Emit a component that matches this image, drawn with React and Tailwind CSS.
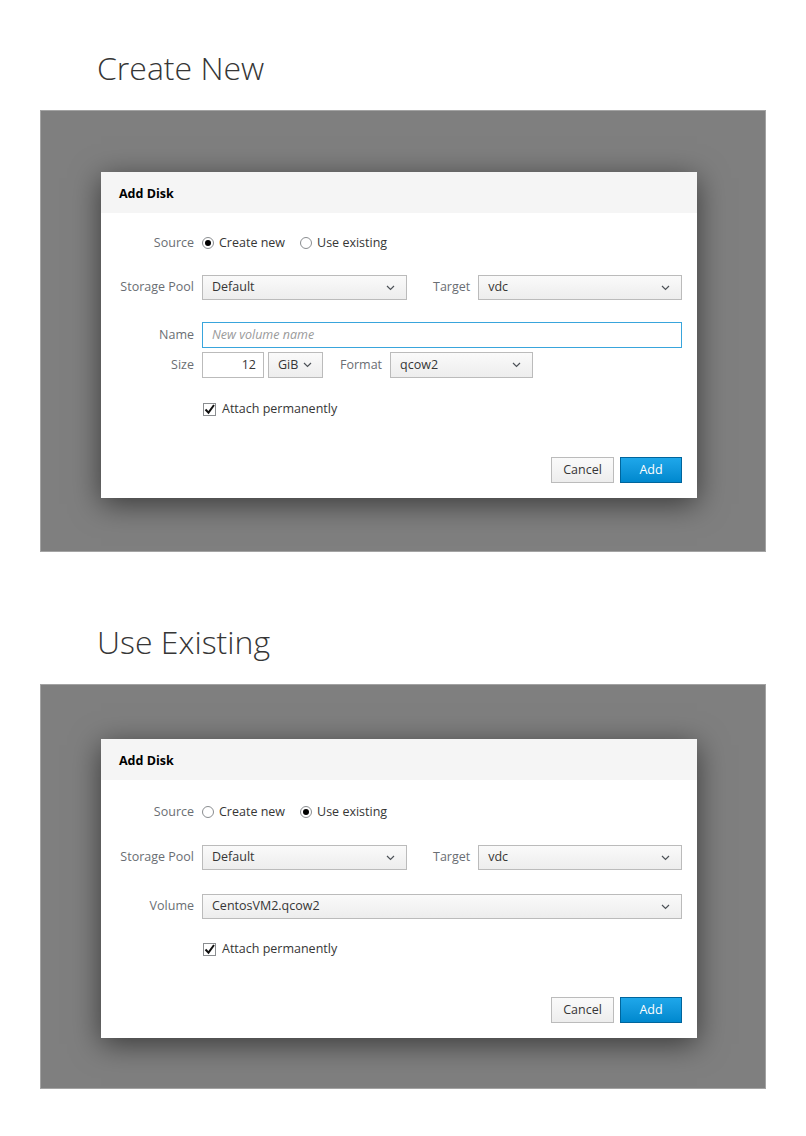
const font = { fontFamily: '"Open Sans", "Liberation Sans", sans-serif' };

const Chevron = () => (
    <svg width="9" height="6" viewBox="0 0 9 6" className="shrink-0">
        <path d="M1 1l3.5 3.5L8 1" fill="none" stroke="#4d5258" strokeWidth="1.2" />
    </svg>
);

const Select = ({ value, className = '' }) => (
    <div
        className={`h-[25px] flex items-center justify-between pl-[9px] pr-[11px] border border-[#bbbbbb] bg-gradient-to-b from-[#fafafa] to-[#ededed] text-[12.5px] text-[#363636] ${className}`}
    >
        <span>{value}</span>
        <Chevron />
    </div>
);

const Label = ({ children }) => (
    <div className="w-[93px] shrink-0 text-right text-[12.5px] text-[#6a6e73]">{children}</div>
);

const Radio = ({ checked, label }) => (
    <div className="flex items-center gap-[5px]">
        <span className="w-[12px] h-[12px] rounded-full border border-[#8a8d90] bg-white flex items-center justify-center">
            {checked && <span className="w-[6px] h-[6px] rounded-full bg-black" />}
        </span>
        <span className="text-[12.5px] text-[#363636]">{label}</span>
    </div>
);

const Checkbox = ({ label }) => (
    <div className="flex items-center gap-[6px]">
        <span className="w-[13px] h-[13px] border border-[#8a8d90] bg-white relative">
            <svg width="13" height="13" viewBox="0 0 13 13" className="absolute -left-[1px] -top-[1px]">
                <path d="M2.5 6.5l3 3.2L11 2" fill="none" stroke="#111" strokeWidth="2" />
            </svg>
        </span>
        <span className="text-[12.5px] text-[#363636]">{label}</span>
    </div>
);

const Buttons = () => (
    <div className="flex justify-end gap-[6px]">
        <button className="w-[63px] h-[26px] border border-[#bbbbbb] bg-gradient-to-b from-[#fafafa] to-[#ededed] text-[12.5px] text-[#363636]">
            Cancel
        </button>
        <button className="w-[62px] h-[26px] border border-[#00659c] bg-gradient-to-b from-[#1ea7ea] to-[#0088ce] text-[12.5px] text-white">
            Add
        </button>
    </div>
);

const Dialog = ({ useExisting }) => (
    <div className="w-[596px] bg-white shadow-[0_6px_28px_rgba(0,0,0,0.55)]">
        <div className="h-[41px] bg-[#f5f5f5] flex items-center pl-[18px] pt-[3px] text-[12.5px] font-bold text-black">
            Add Disk
        </div>
        <div className={`pr-[15px] pb-[15px] ${useExisting ? 'pt-[22px]' : 'pt-[20px]'}`}>
            <div className="h-[20px] flex items-center">
                <Label>Source</Label>
                <div className="ml-[8px] flex items-center gap-[15px]">
                    <Radio checked={!useExisting} label="Create new" />
                    <Radio checked={useExisting} label="Use existing" />
                </div>
            </div>
            <div className={`flex items-center ${useExisting ? 'mt-[23px]' : 'mt-[22px]'}`}>
                <Label>Storage Pool</Label>
                <Select value="Default" className="ml-[8px] w-[205px]" />
                <div className="ml-[26px] text-[12.5px] text-[#6a6e73]">Target</div>
                <Select value="vdc" className="ml-[8px] flex-1" />
            </div>
            {useExisting ? (
                <div className="mt-[24px] flex items-center">
                    <Label>Volume</Label>
                    <Select value="CentosVM2.qcow2" className="ml-[8px] flex-1" />
                </div>
            ) : (
                <>
                    <div className="mt-[22px] flex items-center">
                        <Label>Name</Label>
                        <div className="ml-[8px] flex-1 h-[26px] border border-[#39a5dc] flex items-center pl-[9px] text-[12.5px] italic text-[#9a9a9a]">
                            New volume name
                        </div>
                    </div>
                    <div className="mt-[4px] flex items-center">
                        <Label>Size</Label>
                        <div className="ml-[8px] w-[62px] h-[26px] border border-[#bbbbbb] flex items-center justify-end pr-[7px] text-[12.5px] text-[#363636]">
                            12
                        </div>
                        <div className="ml-[4px] w-[55px] h-[26px] flex items-center justify-between pl-[9px] pr-[10px] border border-[#bbbbbb] bg-gradient-to-b from-[#fafafa] to-[#ededed] text-[12.5px] text-[#363636]">
                            <span>GiB</span>
                            <Chevron />
                        </div>
                        <div className="ml-[17px] text-[12.5px] text-[#6a6e73]">Format</div>
                        <Select value="qcow2" className="ml-[8px] w-[143px] h-[26px]" />
                    </div>
                </>
            )}
            <div className={`ml-[102px] h-[20px] flex items-center ${useExisting ? 'mt-[20px]' : 'mt-[21px]'}`}>
                <Checkbox label="Attach permanently" />
            </div>
            <div className="mt-[38px]">
                <Buttons />
            </div>
        </div>
    </div>
);

const Section = ({ title, useExisting, panelClass }) => (
    <div>
        <h1 className="ml-[97px] h-[40px] leading-[40px] text-[32px] font-light text-[#363636]">{title}</h1>
        <div className={`mt-[22px] ml-[40px] w-[726px] bg-[#7f7f7f] border border-[#a3a3a3] ${panelClass}`}>
            <div className="ml-[60px]">
                <Dialog useExisting={useExisting} />
            </div>
        </div>
    </div>
);

export default function App() {
    return (
        <div className="w-[806px] min-h-[1136px] bg-white" style={font}>
            <div className="pt-[48px]">
                <Section title="Create New" useExisting={false} panelClass="pt-[61px] pb-[53px]" />
            </div>
            <div className="mt-[70px]">
                <Section title="Use Existing" useExisting panelClass="pt-[54px] pb-[50px]" />
            </div>
        </div>
    );
}
